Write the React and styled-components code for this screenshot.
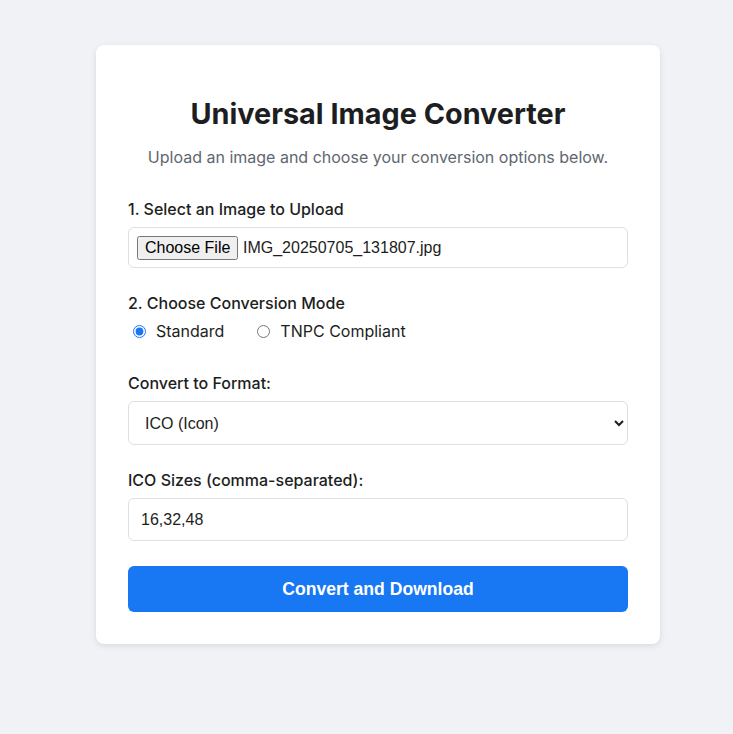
import React from "react";
import styled, { createGlobalStyle } from "styled-components";

const GlobalStyle = createGlobalStyle`
  body {
    margin: 0;
    background: #f0f2f5;
    font-family: Inter, "Noto Sans", sans-serif;
    color: #1c1e21;
  }
`;

const Page = styled.div`
  display: flex;
  justify-content: center;
  align-items: flex-start;
  min-height: 734px;
  box-sizing: border-box;
  padding: 45px 0 0 23px;
`;

const Card = styled.div`
  width: 564px;
  box-sizing: border-box;
  background: #ffffff;
  border-radius: 8px;
  box-shadow: 0 2px 6px rgba(0, 0, 0, 0.1);
  padding: 52px 32px 32px;
`;

const Title = styled.h1`
  margin: 0 0 14px;
  font-size: 28.8px;
  line-height: 34px;
  font-weight: 700;
  text-align: center;
  color: #1c1e21;
`;

const Subtitle = styled.p`
  margin: 0 0 28px;
  font-size: 16px;
  line-height: 24px;
  text-align: center;
  color: #606770;
`;

const Group = styled.div`
  margin-bottom: ${(p) => p.$gap || 23}px;
`;

const Label = styled.label`
  display: block;
  font-size: 16px;
  line-height: 24px;
  font-weight: 500;
  margin-bottom: 6px;
`;

const Field = styled.div`
  border: 1px solid #dddfe2;
  border-radius: 6px;
  padding: 8px;
  font-family: "Liberation Sans", Arial, sans-serif;
  font-size: 16px;
  height: 41px;
  box-sizing: border-box;
  display: flex;
  align-items: center;
`;

const FileInput = styled.input`
  font-family: "Liberation Sans", Arial, sans-serif;
  font-size: 16px;
  color: #1c1e21;
  &::file-selector-button {
    font-family: "Liberation Sans", Arial, sans-serif;
    font-size: 16px;
    margin-right: 4px;
  }
`;

const RadioRow = styled.div`
  display: flex;
  align-items: center;
  gap: 28px;
  height: 20px;
`;

const RadioLabel = styled.label`
  display: flex;
  align-items: center;
  font-size: 16px;
  line-height: 20px;
  gap: 10px;
  input {
    margin: 0 0 0 5px;
    width: 13px;
    height: 13px;
    accent-color: #1877f2;
  }
`;

const Select = styled.select`
  width: 100%;
  height: 44px;
  box-sizing: border-box;
  border: 1px solid #dddfe2;
  border-radius: 6px;
  padding: 0 8px 0 12px;
  background: #ffffff;
  font-family: "Liberation Sans", Arial, sans-serif;
  font-size: 16px;
  color: #1c1e21;
`;

const TextInput = styled.input`
  width: 100%;
  height: 43px;
  box-sizing: border-box;
  border: 1px solid #dddfe2;
  border-radius: 6px;
  padding: 0 12px;
  font-family: "Liberation Sans", Arial, sans-serif;
  font-size: 16px;
  color: #1c1e21;
`;

const Button = styled.button`
  width: 100%;
  height: 46px;
  border: none;
  border-radius: 6px;
  background: #1877f2;
  color: #ffffff;
  font-family: "Liberation Sans", Arial, sans-serif;
  font-size: 17.6px;
  font-weight: 700;
  cursor: pointer;
`;

export default function App() {
  return (
    <>
      <GlobalStyle />
      <Page>
        <Card>
          <Title>Universal Image Converter</Title>
          <Subtitle>Upload an image and choose your conversion options below.</Subtitle>

          <Group>
            <Label>1. Select an Image to Upload</Label>
            <Field>
              <FileInput type="file" style={{ width: 106 }} />
              <span>IMG_20250705_131807.jpg</span>
            </Field>
          </Group>

          <Group $gap={30}>
            <Label>2. Choose Conversion Mode</Label>
            <RadioRow>
              <RadioLabel>
                <input type="radio" name="mode" defaultChecked />
                Standard
              </RadioLabel>
              <RadioLabel>
                <input type="radio" name="mode" />
                TNPC Compliant
              </RadioLabel>
            </RadioRow>
          </Group>

          <Group>
            <Label>Convert to Format:</Label>
            <Select defaultValue="ico">
              <option value="ico">ICO (Icon)</option>
              <option value="png">PNG</option>
              <option value="jpg">JPG</option>
            </Select>
          </Group>

          <Group $gap={25}>
            <Label>ICO Sizes (comma-separated):</Label>
            <TextInput type="text" defaultValue="16,32,48" />
          </Group>

          <Button>Convert and Download</Button>
        </Card>
      </Page>
    </>
  );
}
